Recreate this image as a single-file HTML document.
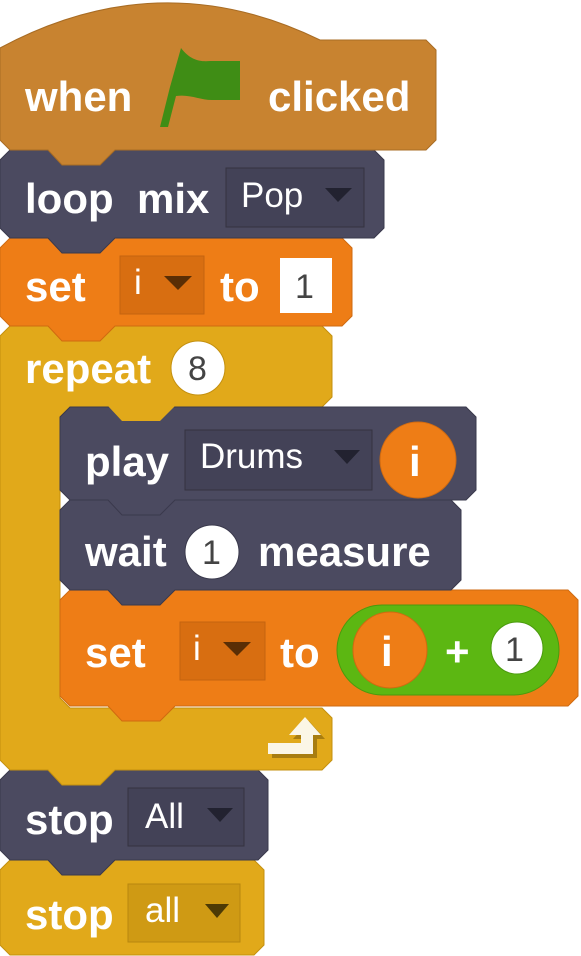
<!DOCTYPE html>
<html><head><meta charset="utf-8"><style>
html,body{margin:0;padding:0;background:#fff;width:581px;height:956px;overflow:hidden}
text{font-family:"Liberation Sans",sans-serif}
.l{font-weight:bold;font-size:42px;fill:#fff}
.d{font-size:35px;fill:#fff}
.n{font-size:34px;fill:#444}
</style></head><body>
<svg width="581" height="956" viewBox="0 0 581 956" xmlns="http://www.w3.org/2000/svg">
<path d="M0,870 L10,860 L254,860 L264,870 L264,945 L254,955 L10,955 L0,945 Z" fill="#e1a91a" stroke="#c4900f" stroke-width="1"/>
<rect x="128" y="884" width="112" height="58" fill="#cf9a14" stroke="#b8870f"/>
<text class="l" x="25" y="929">stop</text>
<text class="d" x="145" y="922">all</text>
<path d="M205,904 L229,904 L217,918 Z" fill="#4d3a05"/>
<path d="M0,780 L10,770 L258,770 L268,780 L268,850 L258,860 L115,860 L100,875 L62,875 L48,860 L10,860 L0,850 Z" fill="#4b4a60" stroke="#3a394c"/>
<rect x="128" y="788" width="116" height="58" fill="#434257" stroke="#34333f"/>
<text class="l" x="25" y="834">stop</text>
<text class="d" x="145" y="828">All</text>
<path d="M207,808 L233,808 L220,822 Z" fill="#222230"/>
<path d="M0,336 L10,326 L322,326 L332,336 L332,397 L322,407 L70,407 L60,417 L60,698 L70,708 L322,708 L332,718 L332,760 L322,770 L115,770 L100,785 L62,785 L48,770 L10,770 L0,760 Z" fill="#e1a91a" stroke="#c4900f"/>
<path d="M272,747 L305,747 L305,739 L293,739 L309,721 L325,739 L317,739 L317,758 L272,758 Z" fill="#a87d10"/>
<path d="M268,743 L301,743 L301,735 L289,735 L305,717 L321,735 L313,735 L313,754 L268,754 Z" fill="#fbf6e6"/>
<path d="M60,600 L70,590 L568,590 L578,600 L578,696 L568,706 L175,706 L160,721 L122,721 L108,706 L70,706 L60,696 Z" fill="#ee7d16" stroke="#cf6a10"/>
<rect x="180" y="622" width="85" height="58" fill="#d86e11" stroke="#c46410"/>
<path d="M223,642 L251,642 L237,656 Z" fill="#5a2e05"/>
<rect x="337" y="605" width="222" height="90" rx="45" fill="#5cb712" stroke="#4a9a0d"/>
<ellipse cx="390" cy="650" rx="37" ry="38" fill="#ee7d16" stroke="#cf6a10"/>
<circle cx="517" cy="648" r="26" fill="#fff" stroke="#4a9a0d"/>
<text class="l" x="85" y="667">set</text>
<text class="d" x="193" y="660">i</text>
<text class="l" x="280" y="667">to</text>
<text class="l" x="381" y="666">i</text>
<text class="l" x="445" y="666">+</text>
<text class="n" x="505" y="661">1</text>
<path d="M60,510 L70,500 L451,500 L461,510 L461,580 L451,590 L175,590 L160,605 L122,605 L108,590 L70,590 L60,580 Z" fill="#4b4a60" stroke="#3a394c"/>
<circle cx="212" cy="552" r="27" fill="#fff" stroke="#3a394c"/>
<text class="l" x="85" y="566">wait</text>
<text class="n" x="202" y="564">1</text>
<text class="l" x="258" y="566">measure</text>
<path d="M60,417 L70,407 L466,407 L476,417 L476,490 L466,500 L175,500 L160,515 L122,515 L108,500 L70,500 L60,490 Z" fill="#4b4a60" stroke="#3a394c"/>
<rect x="185" y="430" width="187" height="60" fill="#434257" stroke="#34333f"/>
<path d="M334,450 L360,450 L347,464 Z" fill="#222230"/>
<circle cx="418" cy="460" r="38" fill="#ee7d16" stroke="#cf6a10"/>
<text class="l" x="85" y="476">play</text>
<text class="d" x="200" y="468">Drums</text>
<text class="l" x="409" y="476">i</text>
<path d="M108,406 L175,406 L160,421 L122,421 Z" fill="#e1a91a"/>
<text class="l" x="25" y="383">repeat</text>
<circle cx="198" cy="368" r="27" fill="#fff" stroke="#c4900f"/>
<text class="n" x="188" y="380">8</text>
<path d="M0,248 L10,238 L342,238 L352,248 L352,316 L342,326 L115,326 L100,341 L62,341 L48,326 L10,326 L0,316 Z" fill="#ee7d16" stroke="#cf6a10"/>
<rect x="120" y="256" width="84" height="58" fill="#d86e11" stroke="#c46410"/>
<path d="M164,276 L192,276 L178,290 Z" fill="#5a2e05"/>
<rect x="280" y="258" width="52" height="55" fill="#fff"/>
<text class="l" x="25" y="301">set</text>
<text class="d" x="134" y="294">i</text>
<text class="l" x="220" y="301">to</text>
<text class="n" x="295" y="298">1</text>
<path d="M0,160 L10,150 L374,150 L384,160 L384,228 L374,238 L115,238 L100,253 L62,253 L48,238 L10,238 L0,228 Z" fill="#4b4a60" stroke="#3a394c"/>
<rect x="226" y="168" width="138" height="59" fill="#434257" stroke="#34333f"/>
<path d="M325,188 L352,188 L338,202 Z" fill="#222230"/>
<text class="l" x="25" y="213">loop</text>
<text class="l" x="137" y="213">mix</text>
<text class="d" x="241" y="207">Pop</text>
<path d="M0,48 Q160,-38 320,40 L426,40 L436,50 L436,140 L426,150 L115,150 L100,165 L62,165 L48,150 L10,150 L0,140 Z" fill="#c88330" stroke="#a86c24"/>
<path d="M181,48 C190,60 200,62 210,61 L240,61 L240,100 L212,100 C200,100 190,94 176,96 L168,127 L160,127 L170,87 Z" fill="#3f8d15"/>
<text class="l" x="25" y="111">when</text>
<text class="l" x="268" y="111">clicked</text>
</svg>
</body></html>
